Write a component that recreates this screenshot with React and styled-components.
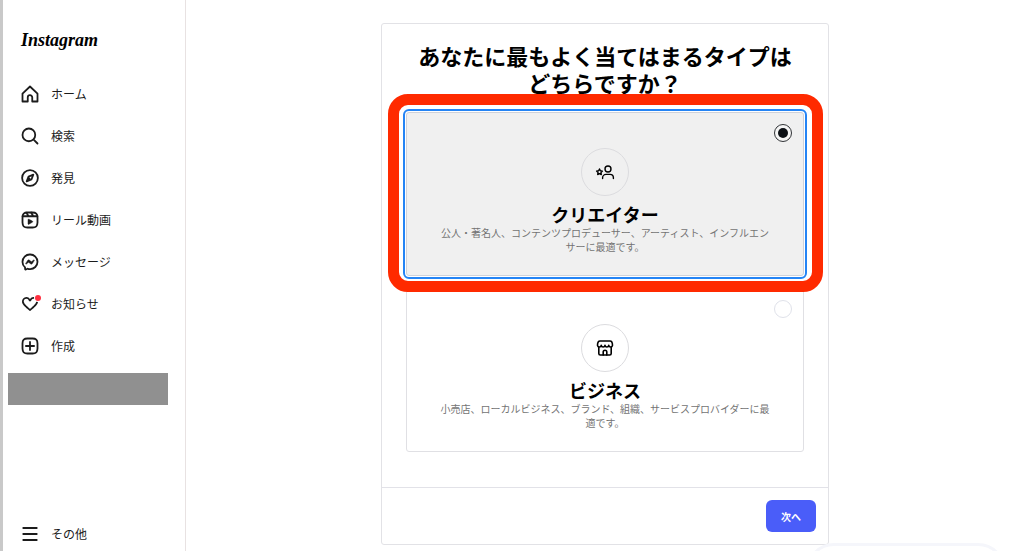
import React, { useState } from "react";
import styled, { createGlobalStyle } from "styled-components";

const GlobalStyle = createGlobalStyle`
  *, *::before, *::after { box-sizing: border-box; }
  body {
    margin: 0;
    background: #fff;
    color: #000;
    font-family: "Noto Sans CJK JP", "Noto Sans", sans-serif;
    font-size: 12px;
  }
`;

const Page = styled.div`
  display: flex;
  min-height: 100vh;
`;

const Sidebar = styled.aside`
  display: flex;
  flex-direction: column;
  flex: 0 0 186px;
  height: 100vh;
  padding: 24px 17px 0 5px;
  border-left: 3px solid #c9c9c9;
  border-right: 1px solid #e8e2e2;
`;

const Logo = styled.a`
  margin: 0 0 21px;
  padding-left: 13px;
  color: #000;
  font: italic bold 18px/32px "Liberation Serif", serif;
  text-decoration: none;
`;

const Nav = styled.nav`
  display: flex;
  flex-direction: column;
  flex: 1;
`;

const NavList = styled.ul`
  display: flex;
  flex-direction: column;
  gap: 8px;
  margin: 0;
  padding: 0;
  list-style: none;
`;

const NavLink = styled.a`
  display: flex;
  align-items: center;
  gap: 12px;
  height: 34px;
  padding-left: 13px;
  color: #1c1c1c;
  line-height: 18px;
  text-decoration: none;
`;

const MoreButton = styled.button`
  display: flex;
  align-items: center;
  gap: 12px;
  height: 34px;
  margin-top: auto;
  padding: 0 0 0 13px;
  border: 0;
  background: none;
  color: #1c1c1c;
  font: inherit;
  line-height: 18px;
`;

const IconSlot = styled.span`
  position: relative;
  display: flex;
  width: 18px;
  height: 18px;
`;

const Badge = styled.span`
  position: absolute;
  top: 0;
  right: -2px;
  width: 6px;
  height: 6px;
  border-radius: 50%;
  background: #ff3040;
  box-shadow: 0 0 0 1px #fff;
`;

const ProfileBlock = styled.div`
  height: 32px;
  margin-top: 10px;
  background: #909090;
`;

const Main = styled.main`
  display: flex;
  flex: 1;
  justify-content: center;
  align-items: flex-start;
  min-width: 0;
  padding-top: 23px;
`;

const Panel = styled.form`
  width: 100%;
  max-width: 448px;
  border: 1px solid #e2e2e6;
  border-radius: 3px;
`;

const PanelBody = styled.div`
  display: flex;
  flex-direction: column;
  padding: 18px 24px 35px;
`;

const Title = styled.h1`
  align-self: center;
  max-width: 384px;
  margin: 0 0 16px;
  font-size: 22px;
  font-weight: 700;
  line-height: 27px;
  text-align: center;
`;

const Options = styled.div`
  display: flex;
  flex-direction: column;
  gap: 12px;
`;

const Option = styled.label`
  position: relative;
  z-index: ${(p) => (p.$selected ? 1 : 0)};
  display: flex;
  flex-direction: column;
  align-items: center;
  padding: 11px 11px 21px;
  border: 1px solid ${(p) => (p.$selected ? "#cfd2da" : "#e0e0e4")};
  border-radius: 3px;
  background: ${(p) => (p.$selected ? "#f0f0f0" : "#fff")};
  outline: ${(p) => (p.$selected ? "2px solid #2484f5" : "none")};
  outline-offset: 1px;
`;

const Highlight = styled.span`
  position: absolute;
  inset: -19px -20px -17px -19px;
  border: 11px solid #ff2a00;
  border-radius: 20px;
  pointer-events: none;
`;

const Radio = styled.input`
  appearance: none;
  align-self: flex-end;
  display: grid;
  place-items: center;
  width: 18px;
  height: 18px;
  margin: 0 0 6px;
  border: 1px solid #e0e2ea;
  border-radius: 50%;
  background: #fff;
  outline: none;

  &:checked {
    border-color: #303336;
    background: #f5f5f5;
  }

  &:checked::before {
    content: "";
    width: 10px;
    height: 10px;
    border-radius: 50%;
    background: #0c1014;
  }
`;

const IconCircle = styled.span`
  display: grid;
  place-items: center;
  width: 48px;
  height: 48px;
  margin-bottom: 8px;
  border: 1px solid #dcdcdf;
  border-radius: 50%;
`;

const OptionTitle = styled.span`
  margin-bottom: 2px;
  font-size: 18px;
  font-weight: 700;
  line-height: 20px;
`;

const OptionText = styled.span`
  max-width: 336px;
  color: #737373;
  font-size: 10px;
  line-height: 14px;
  text-align: center;
`;

const PanelFooter = styled.footer`
  display: flex;
  justify-content: flex-end;
  padding: 12px;
  border-top: 1px solid #e2e2e8;
`;

const NextButton = styled.button`
  height: 32px;
  padding: 0 15px;
  border: 0;
  border-radius: 6px;
  background: #4a5df9;
  color: #fff;
  font: inherit;
  font-size: 10px;
  font-weight: 700;
`;

const FloatingPill = styled.div`
  position: fixed;
  right: 18px;
  bottom: -48px;
  width: 200px;
  height: 56px;
  border: 3px solid #f5f6fb;
  border-radius: 28px;
  background: #fff;
`;

const Svg = ({ size = 18, box = 24, stroke = 2.4, children }) => (
  <svg
    width={size}
    height={size}
    viewBox={`0 0 ${box} ${box}`}
    fill="none"
    stroke="currentColor"
    strokeWidth={stroke}
    strokeLinecap="round"
    strokeLinejoin="round"
    aria-hidden="true"
  >
    {children}
  </svg>
);

const roundedSquare =
  "M2 12v3.449c0 2.849.698 4.006 1.606 4.945.94.908 2.098 1.607 4.946 1.607h6.896c2.848 0 4.006-.699 4.946-1.607.908-.939 1.606-2.096 1.606-4.945V8.552c0-2.848-.698-4.006-1.606-4.945C19.454 2.699 18.296 2 15.448 2H8.552c-2.848 0-4.006.699-4.946 1.607C2.698 4.546 2 5.704 2 8.552Z";

const HomeIcon = () => (
  <Svg>
    <path d="M9.005 16.545a2.997 2.997 0 0 1 2.997-2.997A2.997 2.997 0 0 1 15 16.545V22h7V11.543L12 2 2 11.543V22h7.005Z" />
  </Svg>
);

const SearchIcon = () => (
  <Svg>
    <path d="M19 10.5A8.5 8.5 0 1 1 10.5 2a8.5 8.5 0 0 1 8.5 8.5ZM16.511 16.511 22 22" />
  </Svg>
);

const ExploreIcon = () => (
  <Svg>
    <path d="m13.941 13.953-6.36 2.471 2.479-6.368 6.36-2.471Z" />
    <path d="m10.06 10.056 3.889 3.889-6.368 2.479Z" fill="currentColor" stroke="none" />
    <circle cx="12" cy="12" r="10.5" />
  </Svg>
);

const ReelsIcon = () => (
  <Svg>
    <path d="M2.049 7.002h19.901M13.504 2.001l2.858 5.001M7.207 2.11l2.795 4.892" />
    <path d={roundedSquare} />
    <path
      d="M9.763 17.664a.908.908 0 0 1-.454-.787V11.63a.909.909 0 0 1 1.364-.788l4.545 2.624a.909.909 0 0 1 0 1.575l-4.545 2.624a.91.91 0 0 1-.91 0Z"
      fill="currentColor"
      strokeWidth="0.5"
    />
  </Svg>
);

const MessageIcon = () => (
  <Svg>
    <path d="M12.003 2.001a9.705 9.705 0 1 1 0 19.4 10.876 10.876 0 0 1-2.895-.384.798.798 0 0 0-.533.04l-1.984.876a.801.801 0 0 1-1.123-.708l-.054-1.78a.806.806 0 0 0-.27-.569 9.49 9.49 0 0 1-3.14-7.175 9.65 9.65 0 0 1 10-9.7Z" />
    <path
      d="M17.79 10.132a.659.659 0 0 0-.962-.873l-2.556 2.05a.63.63 0 0 1-.758.002L11.06 9.47a1.576 1.576 0 0 0-2.277.42l-2.567 3.98a.659.659 0 0 0 .961.875l2.556-2.049a.63.63 0 0 1 .759-.002l2.452 1.84a1.576 1.576 0 0 0 2.278-.42Z"
      fill="currentColor"
      strokeWidth="0.5"
    />
  </Svg>
);

const HeartIcon = () => (
  <Svg>
    <path d="M16.792 3.904A4.989 4.989 0 0 1 21.5 9.122c0 3.072-2.652 4.959-5.197 7.222-2.512 2.243-3.865 3.469-4.303 3.752-.477-.309-2.143-1.823-4.303-3.752C5.141 14.072 2.5 12.167 2.5 9.122a4.989 4.989 0 0 1 4.708-5.218 4.21 4.21 0 0 1 3.675 1.941c.84 1.175.98 1.763 1.12 1.763s.278-.588 1.11-1.766a4.17 4.17 0 0 1 3.679-1.938Z" />
  </Svg>
);

const CreateIcon = () => (
  <Svg>
    <path d={roundedSquare} />
    <path d="M6.545 12h10.91M12 6.545v10.91" />
  </Svg>
);

const MenuIcon = () => (
  <Svg>
    <path d="M3 4h18M3 12h18M3 20h18" />
  </Svg>
);

const CreatorIcon = () => (
  <Svg size={20} box={20} stroke={1.4}>
    <path d="m4.5 7 .9 1.800 2 .3-1.400 1.400.3 2-1.800-.9-1.800.9.3-2-1.400-1.400 2-.3Z" />
    <circle cx="13" cy="7" r="3" />
    <path d="M7.600 16.600v-.8a3.400 3.400 0 0 1 3.400-3.400h4a3.400 3.400 0 0 1 3.400 3.400v.8" />
  </Svg>
);

const StoreIcon = () => (
  <Svg size={20} box={20} stroke={1.6}>
    <path d="M5 3h10c1.500 0 2.500 1.600 2.500 4.400a1.900 1.900 0 0 1-3.750 0 1.900 1.900 0 0 1-3.750 0 1.900 1.900 0 0 1-3.750 0 1.900 1.900 0 0 1-3.750 0C2.500 4.600 3.500 3 5 3Z" />
    <path d="M3.800 9.500v6c0 1 .5 1.500 1.500 1.500h9.400c1 0 1.500-.5 1.500-1.500v-6" />
    <path d="M8.200 17v-3a1.800 1.800 0 0 1 3.600 0v3" />
  </Svg>
);

const navItems = [
  { label: "ホーム", Icon: HomeIcon },
  { label: "検索", Icon: SearchIcon },
  { label: "発見", Icon: ExploreIcon },
  { label: "リール動画", Icon: ReelsIcon },
  { label: "メッセージ", Icon: MessageIcon },
  { label: "お知らせ", Icon: HeartIcon, badge: true },
  { label: "作成", Icon: CreateIcon },
];

const accountTypes = [
  {
    id: "creator",
    title: "クリエイター",
    text: "公人・著名人、コンテンツプロデューサー、アーティスト、インフルエンサーに最適です。",
    Icon: CreatorIcon,
    highlighted: true,
  },
  {
    id: "business",
    title: "ビジネス",
    text: "小売店、ローカルビジネス、ブランド、組織、サービスプロバイダーに最適です。",
    Icon: StoreIcon,
  },
];

export default function App() {
  const [selected, setSelected] = useState("creator");

  return (
    <Page>
      <GlobalStyle />
      <Sidebar>
        <Logo href="#">Instagram</Logo>
        <Nav>
          <NavList>
            {navItems.map(({ label, Icon, badge }) => (
              <li key={label}>
                <NavLink href="#">
                  <IconSlot>
                    <Icon />
                    {badge && <Badge />}
                  </IconSlot>
                  {label}
                </NavLink>
              </li>
            ))}
          </NavList>
          <ProfileBlock />
          <MoreButton type="button">
            <IconSlot>
              <MenuIcon />
            </IconSlot>
            その他
          </MoreButton>
        </Nav>
      </Sidebar>
      <Main>
        <Panel onSubmit={(e) => e.preventDefault()}>
          <PanelBody>
            <Title id="type-title">あなたに最もよく当てはまるタイプはどちらですか？</Title>
            <Options role="radiogroup" aria-labelledby="type-title">
              {accountTypes.map(({ id, title, text, Icon, highlighted }) => (
                <Option key={id} htmlFor={id} $selected={selected === id}>
                  <Radio
                    type="radio"
                    id={id}
                    name="account-type"
                    checked={selected === id}
                    onChange={() => setSelected(id)}
                  />
                  <IconCircle>
                    <Icon />
                  </IconCircle>
                  <OptionTitle>{title}</OptionTitle>
                  <OptionText>{text}</OptionText>
                  {highlighted && <Highlight />}
                </Option>
              ))}
            </Options>
          </PanelBody>
          <PanelFooter>
            <NextButton type="submit">次へ</NextButton>
          </PanelFooter>
        </Panel>
      </Main>
      <FloatingPill />
    </Page>
  );
}
